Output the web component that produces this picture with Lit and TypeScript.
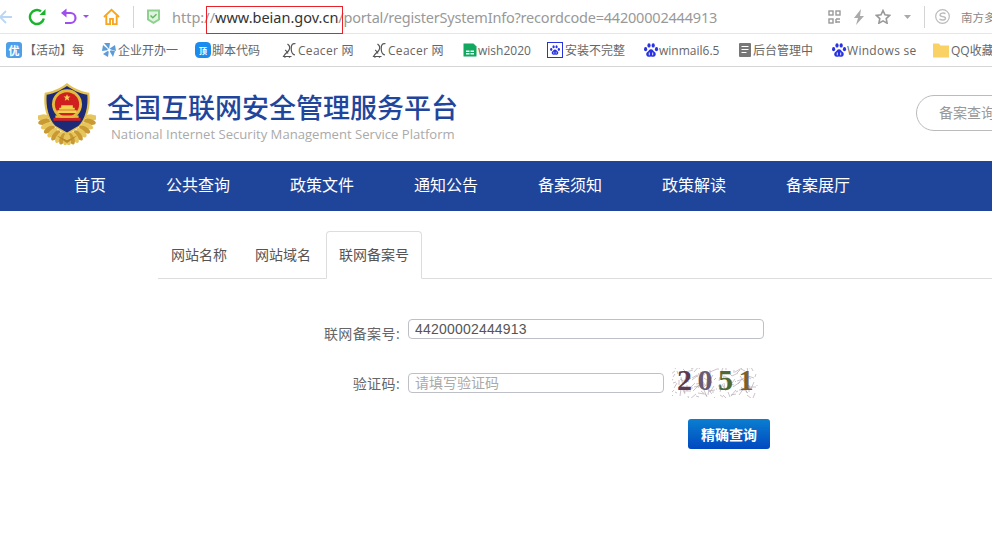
import { LitElement, html, css, svg } from 'lit';
import { customElement } from 'lit/decorators.js';
import { classMap } from 'lit/directives/class-map.js';

const paw = (color: string) => svg`<svg width="16" height="16" viewBox="0 0 16 16">
  <g fill=${color}>
    <ellipse cx="2.600" cy="7.200" rx="1.600" ry="2.100"/>
    <ellipse cx="6" cy="3.400" rx="1.600" ry="2.200"/>
    <ellipse cx="10.200" cy="3.400" rx="1.600" ry="2.200"/>
    <ellipse cx="13.500" cy="7.200" rx="1.600" ry="2.100"/>
    <path d="M8 7.200c-2 0-2.500 2-4 3.100C2.700 11.400 3 14.800 5.600 14.800c1 0 1.600-.4 2.400-.4s1.400.4 2.400.4c2.600 0 2.900-3.400 1.600-4.500C10.500 9.200 10 7.200 8 7.200z"/>
  </g>
  <path d="M6.300 10.500v2.800M9.700 10.500v2.800" stroke="#fff" stroke-width=".9"/>
</svg>`;

const ceacer = svg`<svg width="16" height="16" viewBox="0 0 16 16" fill="none" stroke="#555" stroke-width="1.200">
  <path d="M13.500 1.800c-2.800-1-4.300 1-4.300 4.700s.6 6 3.800 6.500"/>
  <path d="M5.500 2c2.500 1.800 2.800 4 1.300 6.300S3 11.500 1.500 14.500h8"/>
  <path d="M3 8c1 .3 2 1.500 3 3.500M3.500 14.500l-1 1M7 14.500l1 1"/>
</svg>`;

type Bookmark = { label: string; width: number; gap: number; icon: unknown; loose?: boolean };

const bookmarks: Bookmark[] = [
  {
    label: '【活动】每',
    width: 95,
    gap: 2,
    icon: svg`<svg width="16" height="16" viewBox="0 0 16 16"><rect width="16" height="16" rx="3" fill="#4d9fea"/><text x="8" y="12.500" font-size="11" font-weight="700" text-anchor="middle" fill="#fff" font-family="Noto Sans CJK SC">优</text></svg>`,
  },
  {
    label: '企业开办一',
    width: 94,
    gap: 1,
    icon: svg`<svg width="16" height="16" viewBox="0 0 16 16"><g fill="#5b9bd8"><path d="M8 7 3 1h6z"/><path d="M8 7l6-4 1 6z"/><path d="M8 8l6 1-2 6z"/><path d="M8 8l-1 7-5-3z"/><path d="M8 8 1 9l1-6z"/></g><circle cx="8" cy="8" r="1.600" fill="#fff"/></svg>`,
  },
  {
    label: '脚本代码',
    width: 87,
    gap: 1,
    icon: svg`<svg width="16" height="16" viewBox="0 0 16 16"><rect width="16" height="16" rx="4.500" fill="#1a8cf0"/><text x="8" y="11.500" font-size="8" font-weight="700" text-anchor="middle" fill="#fff" font-family="Noto Sans CJK SC">顶</text></svg>`,
  },
  { label: 'Ceacer 网', width: 90, gap: 0, icon: ceacer, loose: true },
  { label: 'Ceacer 网', width: 90, gap: 0, icon: ceacer, loose: true },
  {
    label: 'wish2020',
    width: 85,
    gap: 0,
    icon: svg`<svg width="16" height="16" viewBox="0 0 16 16"><path d="M1.500 1.500h10l3 3v10h-13z" fill="#12a85f"/><path d="M4 8.500h3.500v1.500H4zM8.500 8.500H12v1.500H8.500zM4 11h3.500v1.500H4zM8.500 11H12v1.500H8.500z" fill="#fff"/></svg>`,
  },
  {
    label: '安装不完整',
    width: 96,
    gap: 2,
    icon: svg`<svg width="16" height="16" viewBox="0 0 16 16"><rect x=".5" y=".5" width="15" height="15" fill="#fff" stroke="#2932e1"/><g transform="translate(2.400 2.400) scale(.7)">${paw('#2932e1')}</g></svg>`,
  },
  { label: 'winmail6.5', width: 94, gap: 0, icon: paw('#2932e1') },
  {
    label: '后台管理中',
    width: 94,
    gap: 0,
    icon: svg`<svg width="16" height="16" viewBox="0 0 16 16"><rect x="2" y="1" width="12" height="14" rx="1" fill="#777"/><path d="M4.500 4.500h7M4.500 7.500h7M4.500 10.500h5" stroke="#fff" stroke-width="1.200"/></svg>`,
  },
  { label: 'Windows se', width: 102, gap: 0, icon: paw('#2932e1'), loose: true },
  {
    label: 'QQ收藏',
    width: 70,
    gap: 2,
    icon: svg`<svg width="16" height="16" viewBox="0 0 16 16"><path d="M0 1.500h6L7.500 3.500H16v12H0z" fill="#fad165"/></svg>`,
  },
];

const navItems = ['首页', '公共查询', '政策文件', '通知公告', '备案须知', '政策解读', '备案展厅'];

@customElement('app-root')
export class AppRoot extends LitElement {
  static styles = css`
    :host {
      display: block;
      width: 992px;
      height: 556px;
      overflow: hidden;
      position: relative;
      background: #fff;
      font-family: 'Open Sans', 'Noto Sans CJK SC', sans-serif;
      color: #555;
    }
    .toolbar {
      display: flex;
      align-items: center;
      height: 34px;
      box-sizing: border-box;
      border-bottom: 1px solid #e6e6e6;
      white-space: nowrap;
    }
    .toolbar svg {
      flex: none;
      display: block;
    }
    .back { margin-left: -2px; }
    .reload { margin-left: 16px; }
    .undo { margin-left: 14px; }
    .caret { margin-left: 5px; }
    .home { margin-left: 13px; }
    .sep {
      flex: none;
      width: 1px;
      height: 22px;
      background: #d4d4d4;
    }
    .sep.first { margin-left: 13px; }
    .shield { margin-left: 12px; }
    .url {
      flex: 1;
      min-width: 0;
      margin-left: 11px;
      font-family: 'Noto Sans', sans-serif;
      font-size: 14.5px;
      color: #999;
      overflow: hidden;
    }
    .url b {
      font-weight: 400;
      color: #333;
    }
    .url span {
      letter-spacing: -0.2px;
    }
    .qr { margin-right: 12px; }
    .bolt { margin-right: 10px; }
    .star { margin-right: 13px; }
    .caret2 { margin-right: 13px; }
    .sep.second { margin-right: 10px; }
    .sogou { margin-right: 11px; }
    .user {
      flex: none;
      width: 31px;
      font-size: 11.5px;
      color: #888;
      overflow: hidden;
    }
    .highlight {
      position: absolute;
      left: 206px;
      top: 6px;
      width: 137px;
      height: 28px;
      box-sizing: border-box;
      border: 1px solid #e8222b;
    }
    .bookmarks {
      display: flex;
      align-items: center;
      height: 33px;
      padding-left: 6px;
      box-sizing: border-box;
      border-bottom: 1px solid #d6d6d6;
      white-space: nowrap;
    }
    .bookmark {
      flex: none;
      display: flex;
      align-items: center;
      font-size: 12px;
      color: #666;
    }
    .bookmark.loose { letter-spacing: 0.3px; }
    .bookmark svg { flex: none; display: block; }
    .masthead {
      display: flex;
      align-items: center;
      height: 94px;
      padding-left: 38px;
      white-space: nowrap;
    }
    .emblem { flex: none; display: block; }
    .brand {
      flex: none;
      margin-left: 11px;
      width: 360px;
      padding-top: 4px;
    }
    .brand h1 {
      margin: 0;
      font-size: 27px;
      line-height: 36px;
      font-weight: 500;
      color: #1f469c;
    }
    .brand p {
      margin: 0 0 0 4px;
      font-family: 'Open Sans', sans-serif;
      font-size: 13.1px;
      line-height: 16px;
      color: #aaa;
    }
    .search-pill {
      flex: none;
      margin: 0 0 2px 449px;
      width: 120px;
      height: 36px;
      box-sizing: border-box;
      padding-left: 22px;
      border: 1px solid #bbb;
      border-radius: 18px;
      font-size: 14px;
      line-height: 34px;
      color: #999;
    }
    nav {
      display: flex;
      gap: 60px;
      height: 50px;
      padding-left: 74px;
      background: #1f459b;
      color: #fff;
      font-size: 16px;
      line-height: 48px;
    }
    .tabs {
      display: flex;
      height: 48px;
      margin: 20px 0 0 158px;
      box-sizing: border-box;
      border-bottom: 1px solid #ddd;
      font-size: 14px;
    }
    .tab {
      box-sizing: border-box;
      height: 47px;
      padding: 15px 15px 0 13px;
      line-height: 18px;
      color: #555;
    }
    .tab.active {
      height: 48px;
      border: 1px solid #ddd;
      border-bottom-color: #fff;
      border-radius: 4px 4px 0 0;
      padding: 14px 12px 0;
    }
    form {
      display: grid;
      grid-template-columns: 242px 256px auto;
      column-gap: 8px;
      margin: 40px 0 0 158px;
      align-items: start;
    }
    label {
      font-size: 14px;
      letter-spacing: 0.4px;
      line-height: 20px;
      text-align: right;
      padding-top: 5px;
      color: #666;
    }
    label.row2 { padding-top: 1px; }
    .field {
      box-sizing: border-box;
      height: 20px;
      padding: 0 6px;
      border: 1px solid #bdc0c6;
      border-radius: 4px;
      font-family: 'Liberation Sans', 'Noto Sans CJK SC', sans-serif;
      font-size: 14px;
      letter-spacing: 0.2px;
      color: #555;
      background: #fff;
      outline: none;
      width: 100%;
    }
    .field::placeholder {
      color: #aaa;
      letter-spacing: 0;
    }
    .wide {
      grid-column: 2 / 4;
      width: 356px;
    }
    .row2 { margin-top: 29px; }
    .captcha-box {
      position: relative;
      width: 86px;
      height: 30px;
      margin-top: 24px;
      background: #fff;
      overflow: hidden;
    }
    .captcha-box svg { display: block; }
    .digits {
      position: absolute;
      left: 5px;
      top: -3px;
      display: flex;
      gap: 5.500px;
      font-family: 'Liberation Serif', serif;
      font-size: 30px;
      font-weight: 700;
      line-height: 30px;
    }
    .d1 { color: #5b3a50; }
    .d2 { color: #6a5a70; }
    .d3 { color: #4d6a35; }
    .d4 { color: #7a6030; }
    .submit {
      grid-column: 3;
      justify-self: start;
      width: 82px;
      height: 30px;
      margin: 21px 0 0 16px;
      border: 0;
      border-radius: 3px;
      background: linear-gradient(#0a7fd0, #0148c0);
      color: #fff;
      font-family: 'Noto Sans CJK SC', sans-serif;
      font-size: 14px;
      font-weight: 700;
      padding: 0;
    }
  `;

  private noise() {
    // scribble behind the captcha digits, fixed so every render is the same
    const lines = [];
    for (let i = 0; i < 110; i++) {
      const x = (i * 37) % 86;
      const y = (i * 23) % 30;
      const dx = ((i * 13) % 15) - 7;
      const dy = ((i * 7) % 17) - 8;
      lines.push(svg`<line x1=${x} y1=${y} x2=${x + dx} y2=${y + dy} stroke="#a99ca6" stroke-width=".6"/>`);
    }
    return svg`<svg width="86" height="30">${lines}</svg>`;
  }

  private emblem() {
    // wheat wreath drawn as leaves along an arc on each side of the shield
    const leaves = [];
    for (let i = 0; i < 9; i++) {
      const a = 0.25 + i * 0.16;
      const cx = 29 + 26 * Math.cos(a) * (1 - i * 0.02);
      const cy = 28 + 30 * Math.sin(a);
      const deg = (a * 180) / Math.PI + 80;
      const fill = i % 2 ? '#c99a33' : '#e6c65c';
      leaves.push(svg`<ellipse cx=${cx} cy=${cy} rx="3" ry="6.500" fill=${fill} transform="rotate(${deg} ${cx} ${cy})"/>`);
      const mx = 58 - cx;
      leaves.push(svg`<ellipse cx=${mx} cy=${cy} rx="3" ry="6.500" fill=${fill} transform="rotate(${-deg} ${mx} ${cy})"/>`);
    }
    return svg`<svg class="emblem" width="58" height="62" viewBox="0 0 58 64">
      ${leaves}
      <path d="M18 54c4 3 8 6 11 8 3-2 7-5 11-8l-11 5z" fill="#b8892b"/>
      <path d="M29 0c6 5 15 9 23 10 2 14-2 28-10 35L29 54 16 45C8 38 4 24 6 10 14 9 23 5 29 0z" fill="#e4c04e"/>
      <path d="M29 3c6 4 13 8 21 9 1 12-2 25-9 32L29 51 17 44C10 37 7 24 8 12c8-1 15-5 21-9z" fill="#1c2a78"/>
      <circle cx="29" cy="22" r="15.500" fill="#e2bb3f"/>
      <circle cx="29" cy="22" r="12.500" fill="#cf1f1f"/>
      <path d="M29 11.500l1 2.500h2.600l-2.100 1.600.8 2.600-2.300-1.500-2.300 1.500.8-2.600-2.100-1.600H28z" fill="#f2d24f"/>
      <path d="M23 23h12v2.500H23zM21 25.500h16v2H21zM19 28h20v3H19z" fill="#f2d24f"/>
      <path d="M15 36h28v3H15z" fill="#cf1f1f"/>
      <path d="M17 33.500h24v2.500H17z" fill="#e2bb3f"/>
    </svg>`;
  }

  render() {
    return html`
      <div class="toolbar">
        <svg class="back" width="14" height="16" viewBox="0 0 14 16" fill="none" stroke="#b9d7f5" stroke-width="1.800"><path d="M14 8H2M8 2 2 8l6 6"/></svg>
        <svg class="reload" width="18" height="18" viewBox="0 0 18 18" fill="none" stroke="#18b52c" stroke-width="2.400"><path d="M15.800 10.500A7 7 0 1 1 13 3.300"/><path d="M17.500 1v6h-6z" fill="#18b52c" stroke="none"/></svg>
        <svg class="undo" width="17" height="17" viewBox="0 0 17 17" fill="none" stroke="#a04df0" stroke-width="2.200"><path d="M3 5h7.500a4.700 4.700 0 0 1 0 10H5"/><path d="M6.500 .5 1 5l5.500 4.500z" fill="#a04df0" stroke="none"/></svg>
        <svg class="caret" width="8" height="5" viewBox="0 0 8 5"><path d="M1 1h6L4 4z" fill="#a04df0"/></svg>
        <svg class="home" width="17" height="18" viewBox="0 0 18 18" fill="none" stroke="#f6a623" stroke-width="2"><path d="M1 9l8-7.500L17 9"/><path d="M3.500 7.500V16.500h4V11h3v5.500h4V7.500"/></svg>
        <span class="sep first"></span>
        <svg class="shield" width="15" height="17" viewBox="0 0 15 17"><path d="M1 1.500h13v10.500l-6.500 4L1 12z" fill="#8fd08f"/><path d="M3 3.500h9v7.500l-4.500 2.800L3 11z" fill="#dff3df"/><path d="M4.500 7.500l2.300 2.300 3.700-3.500" fill="none" stroke="#62b962" stroke-width="1.500"/></svg>
        <div class="url">http://<b>www.beian.gov.cn</b><span>/portal/registerSystemInfo?recordcode=44200002444913</span></div>
        <svg class="qr" width="13" height="14" viewBox="0 0 13 14" fill="none" stroke="#999" stroke-width="1.400"><rect x="1" y="1" width="4" height="4"/><rect x="8" y="1" width="4" height="4"/><rect x="1" y="9" width="4" height="4"/><path d="M8 9h4M8 12h4M8 9v4"/></svg>
        <svg class="bolt" width="12" height="16" viewBox="0 0 12 16"><path d="M8 0 1 9h4l-2 7 8-9H7z" fill="#aaa"/></svg>
        <svg class="star" width="16" height="15" viewBox="0 0 16 15" fill="none" stroke="#999" stroke-width="1.600"><path d="M8 1.500l2 4.300 4.700.6-3.500 3.200.9 4.600L8 11.900l-4.100 2.300.9-4.600L1.300 6.400 6 5.800z"/></svg>
        <svg class="caret2" width="7" height="4" viewBox="0 0 7 4"><path d="M0 0h7L3.500 4z" fill="#aaa"/></svg>
        <span class="sep second"></span>
        <svg class="sogou" width="15" height="15" viewBox="0 0 15 15"><circle cx="7.500" cy="7.500" r="6.800" fill="none" stroke="#bbb" stroke-width="1.200"/><path d="M10.500 4.700c-1.500-1-5.500-1-5.500 1.300s5.500 1 5.500 3.200-4 2.200-6 1" fill="none" stroke="#bbb" stroke-width="1.400"/></svg>
        <div class="user">南方多</div>
      </div>
      <div class="highlight"></div>
      <div class="bookmarks">
        ${bookmarks.map(
          (b) => html`<div class=${classMap({ bookmark: true, loose: !!b.loose })} style="width:${b.width}px;gap:${b.gap}px">${b.icon}<span>${b.label}</span></div>`
        )}
      </div>
      <div class="masthead">
        ${this.emblem()}
        <div class="brand">
          <h1>全国互联网安全管理服务平台</h1>
          <p>National Internet Security Management Service Platform</p>
        </div>
        <div class="search-pill">备案查询</div>
      </div>
      <nav>${navItems.map((n) => html`<span>${n}</span>`)}</nav>
      <div class="tabs">
        <div class="tab">网站名称</div>
        <div class="tab">网站域名</div>
        <div class="tab active">联网备案号</div>
      </div>
      <form>
        <label>联网备案号:</label>
        <input class="field wide" value="44200002444913" />
        <label class="row2">验证码:</label>
        <input class="field row2" placeholder="请填写验证码" />
        <div class="captcha-box">
          ${this.noise()}
          <div class="digits">
            <span class="d1">2</span>
            <span class="d2">0</span>
            <span class="d3">5</span>
            <span class="d4">1</span>
          </div>
        </div>
        <button class="submit" type="button">精确查询</button>
      </form>
    `;
  }
}
